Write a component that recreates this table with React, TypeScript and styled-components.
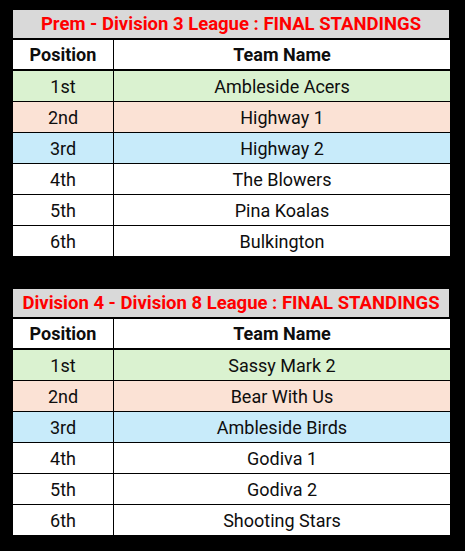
import React from 'react';
import styled, { createGlobalStyle } from 'styled-components';

type Place = 'first' | 'second' | 'third' | 'rest';

interface Standing {
  position: string;
  team: string;
  place: Place;
}

interface League {
  title: string;
  standings: Standing[];
}

const leagues: League[] = [
  {
    title: 'Prem - Division 3 League : FINAL STANDINGS',
    standings: [
      { position: '1st', team: 'Ambleside Acers', place: 'first' },
      { position: '2nd', team: 'Highway 1', place: 'second' },
      { position: '3rd', team: 'Highway 2', place: 'third' },
      { position: '4th', team: 'The Blowers', place: 'rest' },
      { position: '5th', team: 'Pina Koalas', place: 'rest' },
      { position: '6th', team: 'Bulkington', place: 'rest' },
    ],
  },
  {
    title: 'Division 4 - Division 8 League : FINAL STANDINGS',
    standings: [
      { position: '1st', team: 'Sassy Mark 2', place: 'first' },
      { position: '2nd', team: 'Bear With Us', place: 'second' },
      { position: '3rd', team: 'Ambleside Birds', place: 'third' },
      { position: '4th', team: 'Godiva 1', place: 'rest' },
      { position: '5th', team: 'Godiva 2', place: 'rest' },
      { position: '6th', team: 'Shooting Stars', place: 'rest' },
    ],
  },
];

const placeColours: Record<Place, string> = {
  first: '#daf2d0',
  second: '#fbe2d5',
  third: '#c8ebfa',
  rest: '#ffffff',
};

const GlobalStyle = createGlobalStyle`
  html, body {
    margin: 0;
    padding: 0;
    background: #000;
  }
  body {
    font-family: Roboto, 'Liberation Sans', sans-serif;
  }
`;

const Page = styled.div`
  width: 465px;
  height: 551px;
  box-sizing: border-box;
  padding: 10px 0 0 13px;
  background: #000;
  display: flex;
  flex-direction: column;
  gap: 33px;
`;

const Table = styled.div`
  width: 437px;
  display: flex;
  flex-direction: column;
`;

const Title = styled.div`
  width: 436px;
  height: 28px;
  margin-bottom: 2px;
  background: #d9d9d9;
  color: #ff0000;
  font-size: 18.5px;
  font-weight: 700;
  display: flex;
  align-items: center;
  justify-content: center;
  white-space: nowrap;
`;

const Row = styled.div<{ $bg: string; $head?: boolean }>`
  display: grid;
  grid-template-columns: 100px 1fr;
  height: ${(p) => (p.$head ? '29px' : '30px')};
  background: ${(p) => p.$bg};
  border-bottom: ${(p) => (p.$head ? '2px' : '1px')} solid #000;
  font-size: 18px;
  font-weight: ${(p) => (p.$head ? 700 : 400)};
  color: #0e0e0e;

  &:last-child {
    border-bottom: none;
  }
`;

const Cell = styled.div`
  display: flex;
  align-items: center;
  justify-content: center;

  & + & {
    border-left: 1px solid #000;
  }
`;

const StandingsTable: React.FC<{ league: League }> = ({ league }) => (
  <Table>
    <Title>{league.title}</Title>
    <Row $bg="#fff" $head>
      <Cell>Position</Cell>
      <Cell>Team Name</Cell>
    </Row>
    {league.standings.map(({ position, team, place }) => (
      <Row key={position} $bg={placeColours[place]}>
        <Cell>{position}</Cell>
        <Cell>{team}</Cell>
      </Row>
    ))}
  </Table>
);

const App: React.FC = () => (
  <>
    <GlobalStyle />
    <Page>
      {leagues.map((league) => (
        <StandingsTable key={league.title} league={league} />
      ))}
    </Page>
  </>
);

export default App;
